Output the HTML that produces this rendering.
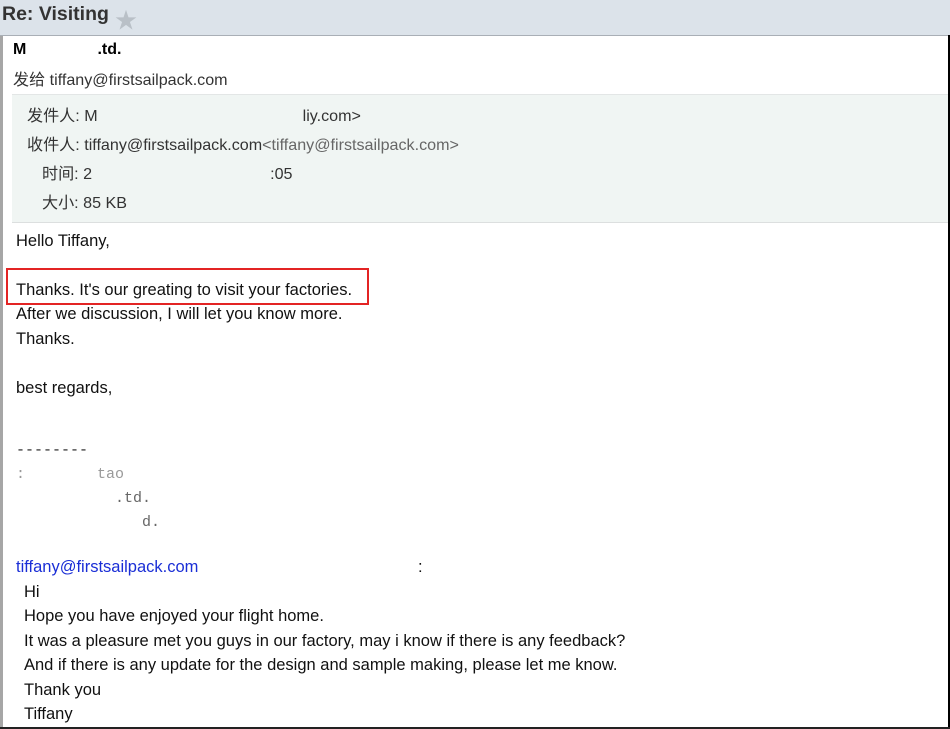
<!DOCTYPE html>
<html><head><meta charset="utf-8"><style>
body{margin:0;width:950px;height:729px;overflow:hidden;background:#fff;font-family:"Liberation Sans","Noto Sans CJK SC",sans-serif;position:relative}
.hdr{position:absolute;left:0;top:0;width:950px;height:35px;background:#dce3ea;border-bottom:1px solid #a9afb6}
.hdr span{position:absolute;left:2px;top:3px;font-size:19.5px;font-weight:bold;color:#333}
.star{position:absolute;left:115px;top:3px;font-size:22px;color:#b9c0c7}
.lb{position:absolute;left:0;top:36px;width:3px;height:693px;background:#a6a6a6}
.rb{position:absolute;left:948px;top:35px;width:2px;height:694px;background:#000}
.bb{position:absolute;left:0;top:727px;width:950px;height:2px;background:#222}
.t{position:absolute;white-space:nowrap}
.meta{position:absolute;left:12px;top:94px;width:938px;height:127px;background:#f0f5f3;border-top:1px solid #e3e6e6;border-bottom:1px solid #dcdfdf}
.m{font-size:16.1px;color:#333}
.b{font-size:16.5px;color:#111;font-family:"Liberation Sans",Arial,sans-serif}
.mono{font-family:"Liberation Mono",monospace;font-size:15px;color:#222}
.box{position:absolute;left:6px;top:268px;width:363px;height:37px;border:2px solid #e32424;box-sizing:border-box}
</style></head><body>
<div class="hdr"><span>Re: Visiting</span><div class="star">★</div></div>
<div class="t" style="left:13px;top:41px;font-size:16px;font-weight:bold;color:#000">M&nbsp;&nbsp;&nbsp;&nbsp;&nbsp;&nbsp;&nbsp;&nbsp;&nbsp;&nbsp;&nbsp;&nbsp;&nbsp;&nbsp;&nbsp;&nbsp;.td.</div>
<div class="t m" style="left:13px;top:66px;color:#333">发给 tiffany@firstsailpack.com</div>
<div class="meta"></div>
<div class="t m" style="left:27px;top:102px">发件人: M<span style="display:inline-block;width:205px"></span>liy.com&gt;</div>
<div class="t m" style="left:27px;top:131px">收件人: tiffany@firstsailpack.com<span style="color:#666">&lt;tiffany@firstsailpack.com&gt;</span></div>
<div class="t m" style="left:42px;top:160px">时间: 2<span style="display:inline-block;width:178px"></span>:05</div>
<div class="t m" style="left:42px;top:189px">大小: 85 KB</div>
<div class="t b" style="left:16px;top:232px">Hello Tiffany,</div>
<div class="t b" style="left:16px;top:281px">Thanks. It's our greating to visit your factories.</div>
<div class="box"></div>
<div class="t b" style="left:16px;top:305px">After we discussion, I will let you know more.</div>
<div class="t b" style="left:16px;top:330px">Thanks.</div>
<div class="t b" style="left:16px;top:379px">best regards,</div>
<div class="t mono" style="left:16px;top:442px">--------</div>
<div class="t mono" style="left:16px;top:466px;color:#999">: &nbsp; &nbsp; &nbsp; &nbsp;tao</div>
<div class="t mono" style="left:16px;top:490px;color:#666">&nbsp;&nbsp;&nbsp;&nbsp;&nbsp;&nbsp;&nbsp;&nbsp;&nbsp;&nbsp;&nbsp;.td.</div>
<div class="t mono" style="left:16px;top:514px;color:#666">&nbsp;&nbsp;&nbsp;&nbsp;&nbsp;&nbsp;&nbsp;&nbsp;&nbsp;&nbsp;&nbsp;&nbsp;&nbsp;&nbsp;d.</div>
<div class="t b" style="left:16px;top:558px;color:#1a2ed6">tiffany@firstsailpack.com</div>
<div class="t b" style="left:418px;top:558px">:</div>
<div class="t b" style="left:24px;top:583px">Hi</div>
<div class="t b" style="left:24px;top:607px">Hope you have enjoyed your flight home.</div>
<div class="t b" style="left:24px;top:632px">It was a pleasure met you guys in our factory, may i know if there is any feedback?</div>
<div class="t b" style="left:24px;top:656px">And if there is any update for the design and sample making, please let me know.</div>
<div class="t b" style="left:24px;top:681px">Thank you</div>
<div class="t b" style="left:24px;top:705px">Tiffany</div>
<div class="lb"></div><div class="rb"></div><div class="bb"></div>
</body></html>
